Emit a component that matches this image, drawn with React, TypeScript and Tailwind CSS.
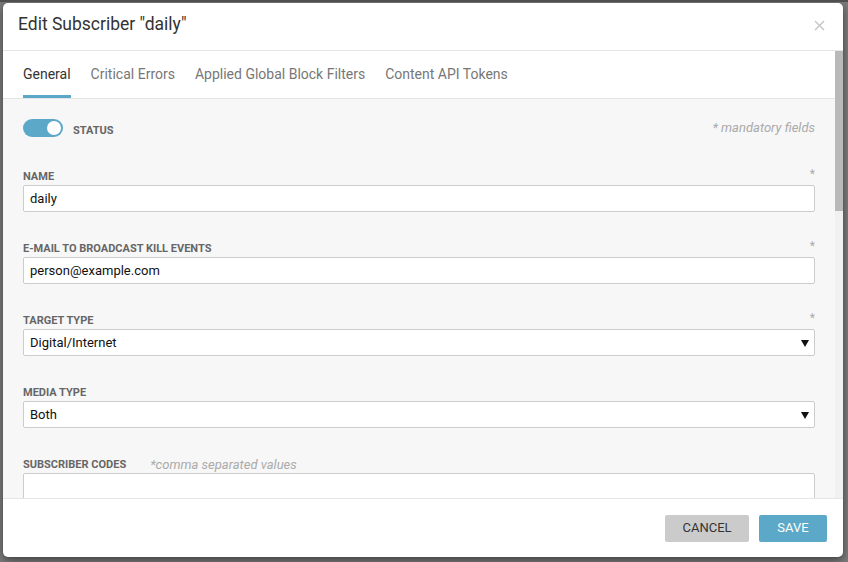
const fields = [
  { label: "NAME", value: "daily", required: true, select: false },
  { label: "E-MAIL TO BROADCAST KILL EVENTS", value: "person@example.com", required: true, select: false },
  { label: "TARGET TYPE", value: "Digital/Internet", required: true, select: true },
  { label: "MEDIA TYPE", value: "Both", required: false, select: true },
];

const tabs = ["General", "Critical Errors", "Applied Global Block Filters", "Content API Tokens"];

function Caret() {
  return (
    <svg width="8" height="7" viewBox="0 0 8 7" className="shrink-0">
      <path d="M0 0h8L4 7z" fill="#111" />
    </svg>
  );
}

export default function App() {
  return (
    <div
      className="w-[848px] h-[562px] overflow-hidden bg-[#7c7c7c] border-t-[2px] border-[#4f4f4f] pl-[3px] pt-[1px]"
      style={{ fontFamily: "Roboto, 'Liberation Sans', sans-serif" }}
    >
      <div className="w-[840px] h-[554px] bg-white rounded-[5px] flex flex-col overflow-hidden shadow-[0_3px_9px_rgba(0,0,0,0.5)]">
        {/* Header */}
        <div className="h-[48px] shrink-0 flex items-center justify-between pl-[15px] pr-[18px] border-b border-[#e5e5e5]">
          <h1 className="text-[17.5px] text-[#333] leading-none pb-[3px]">Edit Subscriber "daily"</h1>
          <svg width="11" height="11" viewBox="0 0 11 11" className="mb-[2px]">
            <path d="M1 1l9 9M10 1l-9 9" stroke="#c4c4c4" strokeWidth="1.4" />
          </svg>
        </div>

        {/* Scrollable body */}
        <div className="flex-1 flex min-h-0">
          <div className="flex-1 flex flex-col min-w-0">
            {/* Tabs */}
            <div className="h-[48px] shrink-0 bg-white border-b border-[#e5e5e5] flex gap-[20px] px-[20px]">
              {tabs.map((t, i) => (
                <div
                  key={t}
                  className={`h-full flex items-center text-[14px] pt-[2px] border-b-[3px] ${
                    i === 0 ? "text-[#333] border-[#5aa7c7]" : "text-[#777] border-transparent"
                  }`}
                >
                  {t}
                </div>
              ))}
            </div>

            {/* Form */}
            <div className="flex-1 bg-[#f7f7f7] px-[20px] pt-[20px] overflow-hidden">
              <div className="flex items-center justify-between h-[18px]">
                <div className="flex items-center gap-[10px]">
                  <div className="w-[40px] h-[18px] rounded-full bg-[#5ba8c8] flex items-center justify-end pr-[2px]">
                    <div className="w-[14px] h-[14px] rounded-full bg-white" />
                  </div>
                  <span className="text-[11px] font-bold text-[#666] pt-[6px]">STATUS</span>
                </div>
                <span className="text-[13px] italic text-[#aaa]">* mandatory fields</span>
              </div>

              {fields.map((f, i) => (
                <div key={f.label} className={i === 0 ? "mt-[33px]" : "mt-[30px]"}>
                  <div className="h-[14px] flex items-center justify-between">
                    <span className="text-[11px] font-bold text-[#666]">{f.label}</span>
                    {f.required && <span className="text-[12px] text-[#aaa] -mt-[6px]">*</span>}
                  </div>
                  <div className="mt-[1px] h-[27px] bg-white border border-[#ccc] rounded-[2px] flex items-center justify-between pl-[6px] pr-[5px] pt-[1px] text-[13px] text-[#111]">
                    <span>{f.value}</span>
                    {f.select && <Caret />}
                  </div>
                </div>
              ))}

              <div className="mt-[30px]">
                <div className="h-[14px] flex items-center gap-[24px]">
                  <span className="text-[11px] font-bold text-[#666]">SUBSCRIBER CODES</span>
                  <span className="text-[13px] italic text-[#aaa]">*comma separated values</span>
                </div>
                <div className="mt-[1px] h-[60px] bg-white border border-[#ccc] rounded-[2px]" />
              </div>
            </div>
          </div>

          {/* Scrollbar */}
          <div className="w-[8px] shrink-0 bg-[#f1f1f1] flex flex-col">
            <div className="h-[160px] bg-[#b9b9b9]" />
          </div>
        </div>

        {/* Footer */}
        <div className="h-[59px] shrink-0 border-t border-[#e5e5e5] flex items-center justify-end gap-[10px] pr-[16px]">
          <button className="w-[84px] h-[27px] rounded-[2px] bg-[#cbcbcb] text-[#333] text-[13px]">CANCEL</button>
          <button className="w-[68px] h-[27px] rounded-[2px] bg-[#5ba8c8] text-white text-[13px]">SAVE</button>
        </div>
      </div>
    </div>
  );
}
